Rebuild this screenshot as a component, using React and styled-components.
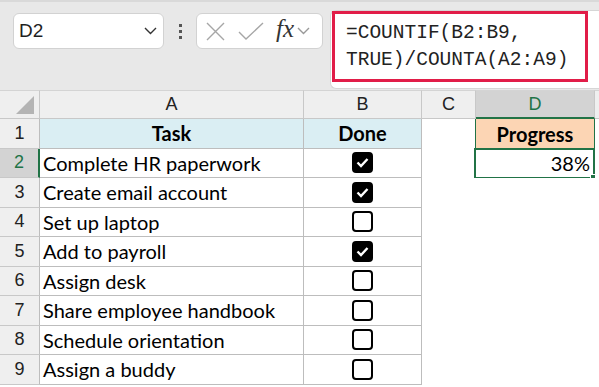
import styled, { createGlobalStyle } from 'styled-components';

const GlobalStyle = createGlobalStyle`
  html, body {
    margin: 0;
    padding: 0;
    background: #ffffff;
  }
  body {
    width: 599px;
    height: 387px;
    overflow: hidden;
  }
`;

const Page = styled.div`
  width: 599px;
  height: 387px;
  overflow: hidden;
  background: #ffffff;
  font-family: Lato, 'Liberation Sans', sans-serif;
`;

const Toolbar = styled.div`
  height: 90px;
  box-sizing: border-box;
  background: #e8e8e8;
  border-top: 2px solid #d9d9d9;
  display: flex;
  align-items: flex-start;
  padding: 11px 0 0 13px;
`;

const NameBox = styled.div`
  width: 151px;
  height: 36px;
  box-sizing: border-box;
  background: #ffffff;
  border: 1px solid #d2d2d2;
  border-radius: 6px;
  display: flex;
  align-items: center;
  justify-content: space-between;
  padding: 0 6px 0 5px;
  font-family: 'Liberation Sans', sans-serif;
  font-size: 19px;
  color: #1f1f1f;
`;

const Dots = styled.div`
  width: 32px;
  height: 36px;
  display: flex;
  flex-direction: column;
  align-items: center;
  justify-content: center;
  gap: 3px;

  span {
    width: 3px;
    height: 3px;
    background: #555;
  }
`;

const FuncBox = styled.div`
  width: 127px;
  height: 36px;
  box-sizing: border-box;
  background: #ffffff;
  border: 1px solid #d2d2d2;
  border-radius: 6px;
  display: flex;
  align-items: center;
  padding: 0 4px 0 9px;
`;

const Fx = styled.span`
  font-family: 'Liberation Serif', serif;
  font-style: italic;
  font-size: 25px;
  color: #333;
  margin: -4px 3px 0 12px;
`;

const FormulaBar = styled.div`
  flex: 1;
  margin-left: 7px;
  margin-top: -3px;
  height: 79px;
  box-sizing: border-box;
  background: #ffffff;
  border: 1px solid #d6d6d6;
  border-right: none;
  border-radius: 6px 0 0 6px;
  padding: 0 0 0 1px;
`;

const Highlight = styled.div`
  width: 256px;
  height: 71px;
  box-sizing: border-box;
  border: 3px solid #e11d48;
  padding: 6px 0 0 11px;
  font-family: 'Liberation Mono', monospace;
  font-size: 19.5px;
  line-height: 27px;
  color: #222;
  white-space: pre;
`;

const Sheet = styled.div`
  display: grid;
  grid-template-columns: 40px 264px 118px 54px 119px 1fr;
  grid-template-rows: 29px repeat(9, 29.5px);
`;

const Corner = styled.div`
  background: #efefef;
  border-right: 1px solid #c8c8c8;
  border-bottom: 1px solid #c8c8c8;
  border-top: 1px solid #d4d4d4;
  box-sizing: border-box;
  display: flex;
  align-items: flex-end;
  justify-content: flex-end;
  padding: 0 5px 4px 0;
`;

const ColHead = styled.div`
  box-sizing: border-box;
  background: ${(p) => (p.$selected ? '#d3d3d3' : '#efefef')};
  color: ${(p) => (p.$selected ? '#217346' : '#222')};
  border-top: 1px solid #d4d4d4;
  border-right: 1px solid #c8c8c8;
  border-bottom: ${(p) => (p.$selected ? '2px solid #217346' : '1px solid #c8c8c8')};
  display: flex;
  align-items: center;
  justify-content: center;
  font-family: 'Liberation Sans', sans-serif;
  font-size: 18px;
`;

const RowHead = styled.div`
  box-sizing: border-box;
  background: ${(p) => (p.$selected ? '#d3d3d3' : '#efefef')};
  color: ${(p) => (p.$selected ? '#217346' : '#222')};
  border-bottom: 1px solid #c8c8c8;
  border-right: ${(p) => (p.$selected ? '2px solid #217346' : '1px solid #bdbdbd')};
  display: flex;
  align-items: center;
  justify-content: center;
  font-family: 'Liberation Sans', sans-serif;
  font-size: 18px;
`;

const Cell = styled.div`
  position: relative;
  box-sizing: border-box;
  background: ${(p) => p.$bg || '#ffffff'};
  border-right: ${(p) => (p.$grid ? '1.5px solid #bdbdbd' : 'none')};
  border-bottom: ${(p) => (p.$grid ? '1.5px solid #bdbdbd' : 'none')};
  display: flex;
  align-items: center;
  justify-content: ${(p) => p.$align || 'flex-start'};
  padding: 0 3px;
  font-size: 20px;
  font-weight: ${(p) => (p.$bold ? 700 : 400)};
  color: #000;
  white-space: nowrap;
`;

const ProgressHead = styled(Cell)`
  border-left: 1px solid #217346;
  border-right: 1px solid #217346;
  margin-left: -1px;
`;

const ActiveCell = styled(Cell)`
  border: 2px solid #217346;
  margin: -1px 0 -1px -2px;
  padding-right: 3px;
`;

const FillHandle = styled.span`
  position: absolute;
  right: -5px;
  bottom: -5px;
  width: 6px;
  height: 6px;
  background: #217346;
  border: 1px solid #ffffff;
`;

const Box = styled.span`
  width: 21px;
  height: 21px;
  box-sizing: border-box;
  border-radius: 4px;
  border: 2px solid #000;
  background: ${(p) => (p.$checked ? '#000' : '#fff')};
  display: flex;
  align-items: center;
  justify-content: center;
`;

const Chevron = ({ color = '#333', w = 13 }) => (
  <svg width={w} height="8" viewBox="0 0 13 8">
    <polyline points="1,1 6.5,6.5 12,1" fill="none" stroke={color} strokeWidth="1.4" />
  </svg>
);

const Checkbox = ({ checked }) => (
  <Box $checked={checked}>
    {checked && (
      <svg width="13" height="11" viewBox="0 0 13 11">
        <polyline points="1.5,5.5 5,9 11.5,2" fill="none" stroke="#fff" strokeWidth="2.4" />
      </svg>
    )}
  </Box>
);

const tasks = [
  ['Complete HR paperwork', true],
  ['Create email account', true],
  ['Set up laptop', false],
  ['Add to payroll', true],
  ['Assign desk', false],
  ['Share employee handbook', false],
  ['Schedule orientation', false],
  ['Assign a buddy', false],
];

export default function App() {
  return (
    <Page>
      <GlobalStyle />
      <Toolbar>
        <NameBox>
          D2
          <Chevron />
        </NameBox>
        <Dots>
          <span />
          <span />
          <span />
        </Dots>
        <FuncBox>
          <svg width="19" height="19" viewBox="0 0 19 19">
            <path d="M1 1 L18 18 M18 1 L1 18" stroke="#a6a6a6" strokeWidth="1.4" />
          </svg>
          <svg width="26" height="19" viewBox="0 0 26 19" style={{ marginLeft: 13 }}>
            <polyline points="1,10 8,17 25,1" fill="none" stroke="#a6a6a6" strokeWidth="1.4" />
          </svg>
          <Fx>fx</Fx>
          <Chevron color="#999" w={13} />
        </FuncBox>
        <FormulaBar>
          <Highlight>{'=COUNTIF(B2:B9,\nTRUE)/COUNTA(A2:A9)'}</Highlight>
        </FormulaBar>
      </Toolbar>
      <Sheet>
        <Corner>
          <svg width="18" height="18" viewBox="0 0 18 18">
            <polygon points="18,0 18,18 0,18" fill="#b4b4b4" />
          </svg>
        </Corner>
        <ColHead>A</ColHead>
        <ColHead>B</ColHead>
        <ColHead>C</ColHead>
        <ColHead $selected>D</ColHead>
        <ColHead />

        <RowHead>1</RowHead>
        <Cell $grid $bg="#daeef3" $bold $align="center">Task</Cell>
        <Cell $grid $bg="#daeef3" $bold $align="center">Done</Cell>
        <Cell />
        <ProgressHead $bg="#fcd5b4" $bold $align="center">Progress</ProgressHead>
        <Cell />

        {tasks.map(([name, done], i) => (
          <Row key={name} n={i + 2} name={name} done={done} />
        ))}
      </Sheet>
    </Page>
  );
}

function Row({ n, name, done }) {
  return (
    <>
      <RowHead $selected={n === 2}>{n}</RowHead>
      <Cell $grid>{name}</Cell>
      <Cell $grid $align="center">
        <Checkbox checked={done} />
      </Cell>
      <Cell />
      {n === 2 ? (
        <ActiveCell $align="flex-end">
          38%
          <FillHandle />
        </ActiveCell>
      ) : (
        <Cell />
      )}
      <Cell />
    </>
  );
}
